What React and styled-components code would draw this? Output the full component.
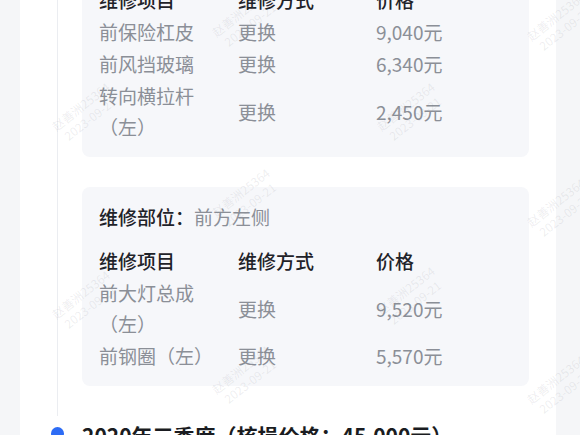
import React from 'react'
import styled, { createGlobalStyle } from 'styled-components'

const GlobalStyle = createGlobalStyle`
  html, body {
    margin: 0;
    padding: 0;
    background: #f5f6f8;
    font-family: "Noto Sans CJK SC", "Noto Sans", sans-serif;
  }
`

const parts = [
  {
    part: '前方正面',
    items: [
      { name: '前保险杠皮', way: '更换', price: '9,040元' },
      { name: '前风挡玻璃', way: '更换', price: '6,340元' },
      { name: '转向横拉杆（左）', way: '更换', price: '2,450元' },
    ],
  },
  {
    part: '前方左侧',
    items: [
      { name: '前大灯总成（左）', way: '更换', price: '9,520元' },
      { name: '前钢圈（左）', way: '更换', price: '5,570元' },
    ],
  },
]

const marks = [
  [85, 112], [245, 18], [245, 198], [245, 375], [410, 112], [410, 296],
  [85, 300], [560, 22], [560, 208], [560, 385],
]

export default function App() {
  return (
    <>
      <GlobalStyle />
      <Page>
        <Card>
          <Item line>
            {parts.map((p) => (
              <RepairBox key={p.part}>
                <PartLine>
                  <b>维修部位：</b>
                  <span>{p.part}</span>
                </PartLine>
                <Table>
                  <Head>维修项目</Head>
                  <Head>维修方式</Head>
                  <Head>价格</Head>
                  {p.items.map((it) => (
                    <React.Fragment key={it.name}>
                      <Cell>{it.name}</Cell>
                      <Cell>{it.way}</Cell>
                      <Cell>{it.price}</Cell>
                    </React.Fragment>
                  ))}
                </Table>
              </RepairBox>
            ))}
          </Item>
          <Item>
            <Dot />
            <Title>2020年三季度（核损价格：45,000元）</Title>
          </Item>
        </Card>
        <Watermarks>
          {marks.map(([x, y], i) => (
            <Mark key={i} style={{ left: x, top: y }}>
              <div>赵善洲25364</div>
              <div>2023-09-21</div>
            </Mark>
          ))}
        </Watermarks>
      </Page>
    </>
  )
}

const Page = styled.div`
  position: relative;
  height: 435px;
  overflow: hidden;
`

const Card = styled.div`
  margin-left: 20px;
  width: 536px;
  height: 100%;
  background: #fff;
  padding-right: 27px;
  box-sizing: border-box;
  overflow: hidden;
`

const Item = styled.div`
  position: relative;
  margin-left: 37px;
  padding-left: 24px;
  border-left: 1px solid ${(p) => (p.line ? '#ebedf1' : 'transparent')};
  display: flex;
  flex-direction: column;
  gap: 30px;
  padding-bottom: ${(p) => (p.line ? '30px' : '0')};
  &:first-child {
    margin-top: -74px;
  }
`

const RepairBox = styled.div`
  background: #f6f7fa;
  border-radius: 8px;
  padding: 14px 17px 15px 17px;
`

const PartLine = styled.div`
  font-size: 19px;
  line-height: 31px;
  margin-bottom: 13px;
  b {
    color: #1f2329;
    font-weight: 500;
  }
  span {
    color: #8b8f97;
  }
`

const Table = styled.div`
  display: grid;
  grid-template-columns: 139px 138px 1fr;
  row-gap: 1px;
  align-items: center;
`

const Head = styled.div`
  font-size: 19px;
  line-height: 31px;
  color: #1f2329;
  font-weight: 500;
`

const Cell = styled.div`
  font-size: 19px;
  line-height: 31px;
  color: #8b8f97;
  padding-right: 30px;
`

const Dot = styled.div`
  position: absolute;
  left: -7px;
  top: 11px;
  width: 13px;
  height: 13px;
  border-radius: 50%;
  background: #2d6cf5;
`

const Title = styled.div`
  font-size: 21px;
  line-height: 30px;
  padding-top: 4px;
  font-weight: 700;
  color: #1a1c21;
  white-space: nowrap;
`

const Watermarks = styled.div`
  position: absolute;
  inset: 0;
  pointer-events: none;
`

const Mark = styled.div`
  position: absolute;
  transform: translate(-50%, -50%) rotate(-38deg);
  font-size: 12px;
  line-height: 15px;
  color: rgba(120, 125, 135, 0.13);
  text-align: center;
  white-space: nowrap;
`
